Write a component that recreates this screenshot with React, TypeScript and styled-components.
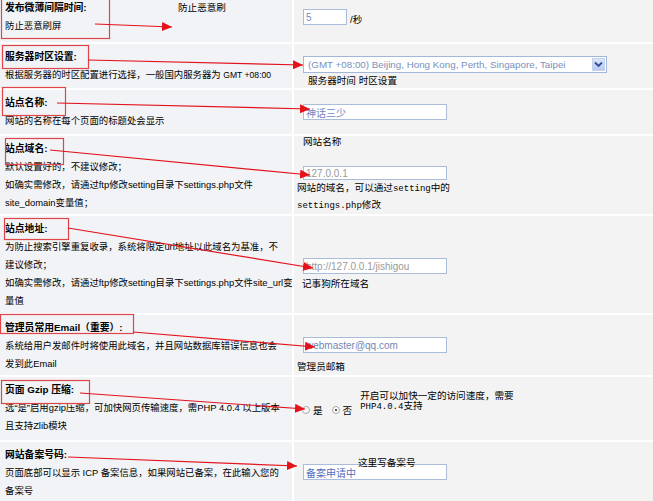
import styled, { createGlobalStyle } from "styled-components";

const GlobalStyle = createGlobalStyle`
  html, body {
    margin: 0;
    padding: 0;
    background: #fff;
  }
  body {
    font-family: "Liberation Sans", "Noto Sans CJK SC", sans-serif;
    color: #000;
  }
`;

const rowHeights = [47, 44, 44, 78, 97, 60, 63, 60];

// red marks drawn over the form
const boxes = [
  { x: 1, y: -2, w: 108, h: 40 },
  { x: 2, y: 45, w: 86, h: 23 },
  { x: 2, y: 87, w: 63, h: 28 },
  { x: 5, y: 138, w: 58, h: 26 },
  { x: 4, y: 218, w: 64, h: 21 },
  { x: 0, y: 314, w: 133, h: 19 },
  { x: 1, y: 380, w: 88, h: 23 },
];

const arrows = [
  [95, 24, 172, 27],
  [88, 60, 303, 65],
  [57, 103, 310, 109],
  [50, 150, 310, 175],
  [68, 228, 313, 268],
  [133, 332, 315, 347],
  [80, 393, 305, 409],
  [68, 457, 297, 466],
];

export default function App() {
  return (
    <Page>
      <GlobalStyle />
      <Table>
        <Info>
          <Title>发布微薄间隔时间:</Title>
          <div>防止恶意刷屏</div>
          <Note>防止恶意刷</Note>
        </Info>
        <Field $top={14}>
          <InputLine>
            <TextInput $w={44} $color="#6f8cc6" defaultValue="5" readOnly />
            <Unit>/秒</Unit>
          </InputLine>
        </Field>

        <Info>
          <Title>服务器时区设置:</Title>
          <div>
            根据服务器的时区配置进行选择，一般国内服务器为 <Small>GMT +08:00</Small>
          </div>
        </Info>
        <Field $top={12}>
          <SelectBox>
            <span>(GMT +08:00) Beijing, Hong Kong, Perth, Singapore, Taipei</span>
            <DropButton>
              <svg width="9" height="7" viewBox="0 0 9 7">
                <path d="M1 1.5 L4.5 5 L8 1.5" fill="none" stroke="#2d4f9a" strokeWidth="1.8" />
              </svg>
            </DropButton>
          </SelectBox>
          <Caption $dx={5}>服务器时间 时区设置</Caption>
        </Field>

        <Info>
          <Title>站点名称:</Title>
          <div>网站的名称在每个页面的标题处会显示</div>
        </Info>
        <Field $top={14}>
          <TextInput $w={144} $color="#6f86c2" defaultValue="神话三少" readOnly />
        </Field>

        <Info>
          <Title>站点域名:</Title>
          <div>默认设置好的，不建议修改；</div>
          <div>如确实需修改，请通过ftp修改setting目录下settings.php文件</div>
          <div>site_domain变量值；</div>
        </Info>
        <Field $top={0}>
          <Caption $dx={0} $lift={-2}>网站名称</Caption>
          <Spacer $h={21} />
          <TextInput $w={144} $color="#9a9a9a" defaultValue="127.0.0.1" readOnly />
          <Caption $dx={-6}>
            网站的域名，可以通过<Mono>setting</Mono>中的
            <br />
            <Mono>settings.php</Mono>修改
          </Caption>
        </Field>

        <Info>
          <Title>站点地址:</Title>
          <div>为防止搜索引擎重复收录，系统将限定url地址以此域名为基准，不</div>
          <div>建议修改；</div>
          <div>如确实需修改，请通过ftp修改setting目录下settings.php文件site_url变</div>
          <div>量值</div>
        </Info>
        <Field $top={42}>
          <TextInput $w={144} $color="#9a9a9a" defaultValue="http://127.0.0.1/jishigou" readOnly />
          <Caption $dx={-1} $lift={2}>记事狗所在域名</Caption>
        </Field>

        <Info>
          <Title>管理员常用Email（重要）:</Title>
          <div>系统给用户发邮件时将使用此域名，并且网站数据库错误信息也会</div>
          <div>发到此Email</div>
        </Info>
        <Field $top={22}>
          <TextInput $w={144} $color="#7386b4" defaultValue="webmaster@qq.com" readOnly />
          <Caption $dx={-6} $lift={6}>管理员邮箱</Caption>
        </Field>

        <Info>
          <Title>页面 Gzip 压缩:</Title>
          <div>选“是”启用gzip压缩，可加快网页传输速度，需PHP 4.0.4 以上版本</div>
          <div>且支持Zlib模块</div>
        </Info>
        <Field $top={0}>
          <InlineRow>
            <Radios>
              <Radio />
              <RadioText>是</RadioText>
              <Radio $checked />
              <RadioText>否</RadioText>
            </Radios>
            <Tip>
              开启可以加快一定的访问速度，需要
              <br />
              <Mono>PHP4.0.4</Mono>支持
            </Tip>
          </InlineRow>
        </Field>

        <Info>
          <Title>网站备案号码:</Title>
          <div>页面底部可以显示 ICP 备案信息，如果网站已备案，在此输入您的</div>
          <div>备案号</div>
        </Info>
        <Field $top={22}>
          <InputWrap>
            <TextInput $w={144} $color="#4f6fc0" defaultValue="备案申请中" readOnly />
            <Hint>这里写备案号</Hint>
          </InputWrap>
        </Field>
      </Table>

      <Marks width="653" height="501" viewBox="0 0 653 501">
        <defs>
          <marker
            id="head"
            markerUnits="userSpaceOnUse"
            markerWidth="11"
            markerHeight="9"
            refX="10"
            refY="4.5"
            orient="auto"
          >
            <path d="M0 0 L10 4.5 L0 9 Z" fill="#e3121b" />
          </marker>
        </defs>
        {boxes.map((b, i) => (
          <rect key={i} x={b.x + 0.5} y={b.y + 0.5} width={b.w} height={b.h} fill="none" stroke="#e0454a" strokeWidth="1.2" />
        ))}
        {arrows.map(([x1, y1, x2, y2], i) => (
          <line key={i} x1={x1} y1={y1} x2={x2} y2={y2} stroke="#e3121b" strokeWidth="1.2" markerEnd="url(#head)" />
        ))}
      </Marks>
    </Page>
  );
}

const Page = styled.div`
  position: relative;
  width: 653px;
  height: 501px;
  overflow: hidden;
  background: #fff;
`;

const Table = styled.div`
  display: grid;
  grid-template-columns: 292px 1fr;
  grid-template-rows: ${rowHeights.map((h) => `${h}px`).join(" ")};
  gap: 2px;
  margin-top: -5px;
`;

const Info = styled.div`
  position: relative;
  background: #f1f3f7;
  padding: 4px 5px 0;
  font-size: 9.4px;
  line-height: 18px;
  white-space: nowrap;
`;

const Title = styled.div`
  font-weight: bold;
  font-size: 9.8px;
`;

const Small = styled.span`
  font-size: 8.6px;
`;

const Note = styled.span`
  position: absolute;
  left: 178px;
  top: 4px;
  font-size: 9.6px;
  line-height: 18px;
`;

const Field = styled.div<{ $top: number }>`
  position: relative;
  background: #f3f3f3;
  padding: ${(p) => p.$top}px 0 0 9px;
  display: flex;
  flex-direction: column;
  align-items: flex-start;
  font-size: 9.6px;
`;

const InputLine = styled.div`
  display: flex;
  align-items: flex-end;
`;

const TextInput = styled.input<{ $w: number; $color: string }>`
  box-sizing: border-box;
  width: ${(p) => p.$w}px;
  height: 16px;
  margin: 0;
  padding: 0 2px;
  border: 1px solid #a9bcd9;
  background: #fff;
  color: ${(p) => p.$color};
  font-family: "Liberation Sans", "Noto Sans CJK SC", sans-serif;
  font-size: 10px;
  outline: none;
`;

const Unit = styled.span`
  margin-left: 3px;
  line-height: 12px;
  margin-bottom: -1px;
`;

const SelectBox = styled.div`
  box-sizing: border-box;
  width: 304px;
  height: 17px;
  display: flex;
  align-items: center;
  justify-content: space-between;
  padding: 0 1px 0 4px;
  border: 1px solid #a3b7d8;
  background: #fff;
  color: #7a8fbd;
  font-size: 9.8px;
  white-space: nowrap;
`;

const DropButton = styled.span`
  width: 13px;
  height: 13px;
  display: flex;
  align-items: center;
  justify-content: center;
  background: linear-gradient(#dbe5f8, #b9cbef);
  border: 1px solid #c3d2ee;
  box-sizing: border-box;
`;

const Caption = styled.div<{ $dx: number; $lift?: number }>`
  margin-left: ${(p) => p.$dx}px;
  margin-top: ${(p) => p.$lift ?? 0}px;
  font-size: 9.6px;
  line-height: 15px;
  white-space: nowrap;
`;

const Mono = styled.span`
  font-family: "Liberation Mono", "Noto Sans CJK SC", monospace;
  font-size: 9px;
`;

const Spacer = styled.div<{ $h: number }>`
  height: ${(p) => p.$h}px;
`;

const InlineRow = styled.div`
  display: flex;
  align-items: flex-start;
`;

const Radios = styled.div`
  display: flex;
  align-items: center;
  margin: 26px 0 0 -1px;
  height: 14px;
`;

const Radio = styled.span<{ $checked?: boolean }>`
  position: relative;
  box-sizing: border-box;
  width: 8px;
  height: 8px;
  border-radius: 50%;
  border: 1px solid #a8a8a8;
  background: #fbfbfb;
  margin-left: ${(p) => (p.$checked ? 9 : 0)}px;
  &::after {
    content: "";
    display: ${(p) => (p.$checked ? "block" : "none")};
    position: absolute;
    left: 2px;
    top: 2px;
    width: 2px;
    height: 2px;
    border-radius: 50%;
    background: #222;
  }
`;

const RadioText = styled.span`
  margin-left: 3px;
  font-size: 9.6px;
`;

const Tip = styled.div`
  margin: 14px 0 0 8px;
  font-size: 9.6px;
  line-height: 10px;
  white-space: nowrap;
`;

const InputWrap = styled.div`
  position: relative;
`;

const Hint = styled.span`
  position: absolute;
  left: 55px;
  top: -7px;
  font-size: 9.6px;
  line-height: 12px;
  white-space: nowrap;
`;

const Marks = styled.svg`
  position: absolute;
  left: 0;
  top: 0;
  pointer-events: none;
`;
